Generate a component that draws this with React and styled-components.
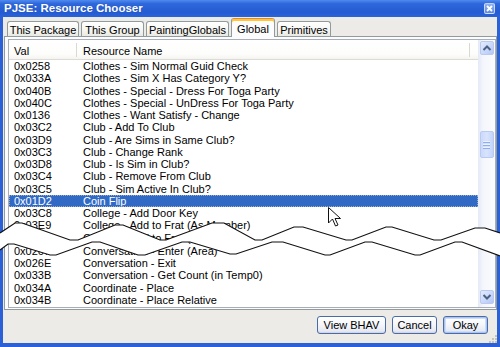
import React from "react";
import styled, { createGlobalStyle } from "styled-components";

const GlobalStyle = createGlobalStyle`
  html, body { margin: 0; padding: 0; background: #ffffff; }
  body { font-family: "Liberation Sans", Arial, sans-serif; }
`;

const Window = styled.div`
  position: relative;
  width: 500px;
  height: 347px;
  display: flex;
  flex-direction: column;
  overflow: hidden;
  font-family: "Liberation Sans", Arial, sans-serif;
  font-size: 11px;
  color: #000;
`;

const TitleBar = styled.div`
  flex: none;
  height: 17px;
  display: flex;
  align-items: center;
  justify-content: space-between;
  padding: 0 5px 0 4px;
  background: linear-gradient(to bottom, #4f8bee 0%, #2e67dc 22%, #255bd1 70%, #2a62da 100%);
`;

const Title = styled.span`
  color: #ffffff;
  font-weight: bold;
  font-size: 11.5px;
  line-height: 17px;
  text-shadow: 0 0 1px rgba(10, 30, 100, 0.35);
`;

const CloseBox = styled.div`
  width: 11px;
  height: 11px;
  box-sizing: border-box;
  border: 1px solid rgba(255, 255, 255, 0.6);
  border-radius: 2px;
  background: linear-gradient(#8fb0ef, #5d88e2);
  display: flex;
  align-items: center;
  justify-content: center;
`;

const Frame = styled.div`
  flex: 1;
  min-height: 0;
  display: flex;
  flex-direction: column;
  border: solid #2b60d6;
  border-width: 0 3px 4px 3px;
  background: #ecebe7;
`;

const TabStrip = styled.div`
  flex: none;
  height: 19px;
  display: flex;
  align-items: flex-end;
  gap: 2px;
  padding-left: 4px;
`;

const Tab = styled.div`
  position: relative;
  z-index: ${(p) => (p.$active ? 2 : 0)};
  box-sizing: border-box;
  width: ${(p) => p.$w}px;
  height: ${(p) => (p.$active ? 19 : 15)}px;
  margin-bottom: ${(p) => (p.$active ? -1 : 0)}px;
  display: flex;
  align-items: center;
  justify-content: center;
  padding-top: ${(p) => (p.$active ? 2 : 1)}px;
  border: 1px solid #919b9c;
  border-bottom: none;
  border-top-color: ${(p) => (p.$active ? "#e68b2c" : "#919b9c")};
  border-radius: 3px 3px 0 0;
  background: ${(p) =>
    p.$active
      ? "#fcfcfe"
      : "linear-gradient(to bottom, #ffffff 0%, #f7f7f4 50%, #eaeae4 100%)"};
  box-shadow: ${(p) => (p.$active ? "inset 0 2px 0 #ffc83c" : "none")};
  white-space: nowrap;
`;

const TabPanel = styled.div`
  flex: none;
  height: 274px;
  box-sizing: border-box;
  margin-left: 1px;
  border: 1px solid #919b9c;
  background: #fcfcfe;
  padding: 2px 0 1px 3px;
`;

const ListView = styled.div`
  height: 269px;
  box-sizing: border-box;
  border: 1px solid #a7aeb8;
  background: #ffffff;
  display: flex;
`;

const ListMain = styled.div`
  flex: 1;
  min-width: 0;
  display: flex;
  flex-direction: column;
  overflow: hidden;
`;

const Header = styled.div`
  flex: none;
  height: 20px;
  display: flex;
  background: linear-gradient(to bottom, #ffffff 0%, #fdfdfc 70%, #f3f2ee 100%);
  box-shadow: inset 0 -1px 0 #dcdbd6;
`;

const HeaderCell = styled.div`
  position: relative;
  box-sizing: border-box;
  width: ${(p) => p.$w}px;
  flex: none;
  display: flex;
  align-items: center;
  padding: 2px 0 0 ${(p) => p.$pad}px;
  &::after {
    content: "";
    position: absolute;
    right: 0;
    top: 3px;
    bottom: 3px;
    width: 1px;
    background: #d9d8d1;
  }
`;

const Rows = styled.div`
  display: flex;
  flex-direction: column;
  margin-top: ${(p) => p.$offset || 0}px;
`;

const Row = styled.div`
  display: grid;
  grid-template-columns: 68px 393px;
  height: 12.25px;
  line-height: 12.25px;
  white-space: nowrap;
  background: ${(p) => (p.$selected ? "#316ac5" : "transparent")};
  color: ${(p) => (p.$selected ? "#ffffff" : "#000000")};
  outline: ${(p) => (p.$selected ? "1px dotted #9aa9cc" : "none")};
  outline-offset: -1px;
`;

const Cell = styled.span`
  padding-left: ${(p) => p.$pad}px;
  overflow: hidden;
`;

const ScrollBar = styled.div`
  flex: none;
  width: 17px;
  display: flex;
  flex-direction: column;
  align-items: center;
  background: linear-gradient(to right, #e3e9f6 0%, #f4f6fc 30%, #fbfcfe 100%);
`;

const ScrollButton = styled.div`
  flex: none;
  width: 14px;
  height: 14px;
  box-sizing: border-box;
  margin: ${(p) => (p.$down ? "0 0 3px" : "1px 0 0")};
  border: 1px solid #b9c9ef;
  border-radius: 2px;
  background: linear-gradient(135deg, #e3ebfd 0%, #c9d8fb 55%, #b4c8f4 100%);
  display: flex;
  align-items: center;
  justify-content: center;
`;

const Thumb = styled.div`
  flex: none;
  width: 14px;
  height: 27px;
  box-sizing: border-box;
  margin-top: 76px;
  border: 1px solid #b9c9ef;
  border-radius: 2px;
  background: linear-gradient(to right, #cbdafc 0%, #d8e3fd 50%, #c3d4fa 100%);
  display: flex;
  flex-direction: column;
  align-items: center;
  justify-content: center;
  gap: 1px;
`;

const Grip = styled.div`
  width: 7px;
  height: 1px;
  background: #ecf1fe;
  box-shadow: 0 1px 0 #8faef0;
  margin-bottom: 1px;
`;

const Spacer = styled.div`
  flex: 1;
`;

const ButtonRow = styled.div`
  position: relative;
  flex: 1;
  display: flex;
  justify-content: flex-end;
  align-items: flex-start;
  gap: 6px;
  padding: 6px 9px 0 0;
`;

const Button = styled.div`
  box-sizing: border-box;
  width: ${(p) => p.$w}px;
  height: 18px;
  display: flex;
  align-items: center;
  justify-content: center;
  border: 1px solid #4a6aa8;
  border-radius: 3px;
  background: linear-gradient(to bottom, #ffffff 0%, #f6f7fb 45%, #e7eaf2 85%, #d8dce8 100%);
  box-shadow: ${(p) =>
    p.$default
      ? "inset 0 0 0 1px #a9c4f0, inset 0 0 0 2px #cfdef7"
      : "inset 0 -1px 0 #d3d6e0"};
  font-size: 11px;
`;

const Grabber = styled.svg`
  position: absolute;
  right: 0;
  bottom: 0;
`;

const Overlay = styled.svg`
  position: absolute;
  left: 0;
  top: 0;
  pointer-events: none;
`;

const tabs = [
  { label: "This Package", w: 72 },
  { label: "This Group", w: 63 },
  { label: "PaintingGlobals", w: 83 },
  { label: "Global", w: 44, active: true },
  { label: "Primitives", w: 54 },
];

const topRows = [
  ["0x0258", "Clothes - Sim Normal Guid Check"],
  ["0x033A", "Clothes - Sim X Has Category Y?"],
  ["0x040B", "Clothes - Special - Dress For Toga Party"],
  ["0x040C", "Clothes - Special - UnDress For Toga Party"],
  ["0x0136", "Clothes - Want Satisfy - Change"],
  ["0x03C2", "Club - Add To Club"],
  ["0x03D9", "Club - Are Sims in Same Club?"],
  ["0x03C3", "Club - Change Rank"],
  ["0x03D8", "Club - Is Sim in Club?"],
  ["0x03C4", "Club - Remove From Club"],
  ["0x03C5", "Club - Sim Active In Club?"],
  ["0x01D2", "Coin Flip", true],
  ["0x03C8", "College - Add Door Key"],
  ["0x03E9", "College - Add to Frat (As Member)"],
  ["0x03EA", "College - Add to Frat (As Pledge)"],
];

const bottomRows = [
  ["0x0267", "Conversation - Enter (Area)"],
  ["0x026E", "Conversation - Exit"],
  ["0x033B", "Conversation - Get Count (in Temp0)"],
  ["0x034A", "Coordinate - Place"],
  ["0x034B", "Coordinate - Place Relative"],
];

const upper = [
  [0, 233], [15, 223], [22, 223], [70, 240], [78, 240], [115, 225], [123, 225],
  [160, 240], [166, 240], [212, 223], [224, 223], [255, 240], [262, 240],
  [294, 227], [303, 227], [346, 240], [352, 240], [386, 227], [392, 227],
  [434, 240], [441, 240], [475, 228], [485, 228], [500, 233],
];

const lower = [
  [0, 250], [8, 244], [14, 244], [50, 255], [56, 255], [92, 242], [100, 242],
  [138, 255], [145, 255], [182, 242], [190, 242], [230, 254], [236, 254],
  [272, 242], [283, 242], [325, 255], [330, 255], [365, 242], [372, 242],
  [415, 255], [420, 255], [455, 242], [462, 242], [500, 256],
];

const pts = (arr) => arr.map(([x, y]) => `${x},${y}`).join(" ");

function ListRows({ rows, offset }) {
  return (
    <Rows $offset={offset}>
      {rows.map(([val, name, sel]) => (
        <Row key={val} $selected={sel}>
          <Cell $pad={5}>{val}</Cell>
          <Cell $pad={6}>{name}</Cell>
        </Row>
      ))}
    </Rows>
  );
}

function Arrow({ down }) {
  return (
    <svg width="10" height="8" viewBox="0 0 10 8">
      <polyline
        points={down ? "1.5,2 5,5.5 8.5,2" : "1.5,6 5,2.5 8.5,6"}
        fill="none"
        stroke="#4d6185"
        strokeWidth="2"
      />
    </svg>
  );
}

export default function App() {
  return (
    <>
      <GlobalStyle />
      <Window>
        <TitleBar>
          <Title>PJSE: Resource Chooser</Title>
          <CloseBox>
            <svg width="7" height="7" viewBox="0 0 7 7">
              <path d="M1 1 L6 6 M6 1 L1 6" stroke="#ffffff" strokeWidth="1.8" />
            </svg>
          </CloseBox>
        </TitleBar>
        <Frame>
          <TabStrip>
            {tabs.map((t) => (
              <Tab key={t.label} $w={t.w} $active={t.active}>
                {t.label}
              </Tab>
            ))}
          </TabStrip>
          <TabPanel>
            <ListView>
              <ListMain>
                <Header>
                  <HeaderCell $w={68} $pad={5}>Val</HeaderCell>
                  <HeaderCell $w={393} $pad={6}>Resource Name</HeaderCell>
                </Header>
                <ListRows rows={topRows} />
                <ListRows rows={bottomRows} offset={1.2} />
              </ListMain>
              <ScrollBar>
                <ScrollButton>
                  <Arrow />
                </ScrollButton>
                <Thumb>
                  <Grip />
                  <Grip />
                  <Grip />
                </Thumb>
                <Spacer />
                <ScrollButton $down>
                  <Arrow down />
                </ScrollButton>
              </ScrollBar>
            </ListView>
          </TabPanel>
          <ButtonRow>
            <Button $w={69}>View BHAV</Button>
            <Button $w={45}>Cancel</Button>
            <Button $w={45} $default>Okay</Button>
            <Grabber width="10" height="10" viewBox="0 0 10 10">
              <g fill="#c5c2b6">
                <rect x="8" y="2" width="2" height="2" />
                <rect x="5" y="5" width="2" height="2" />
                <rect x="8" y="5" width="2" height="2" />
                <rect x="2" y="8" width="2" height="2" />
                <rect x="5" y="8" width="2" height="2" />
                <rect x="8" y="8" width="2" height="2" />
              </g>
            </Grabber>
          </ButtonRow>
        </Frame>

        <Overlay width="500" height="347" viewBox="0 0 500 347">
          <polygon
            points={pts([...upper, ...lower.slice().reverse()])}
            fill="#ffffff"
          />
          <polyline points={pts(upper)} fill="none" stroke="#111" strokeWidth="1.2" />
          <polyline points={pts(lower)} fill="none" stroke="#111" strokeWidth="1.2" />
          <path
            d="M328.5 207.5 L328.5 223 L332.5 219 L335.5 226 L338 225 L335 218.5 L340.5 218.5 Z"
            fill="#ffffff"
            stroke="#111"
            strokeWidth="1"
            strokeLinejoin="miter"
          />
        </Overlay>
      </Window>
    </>
  );
}
